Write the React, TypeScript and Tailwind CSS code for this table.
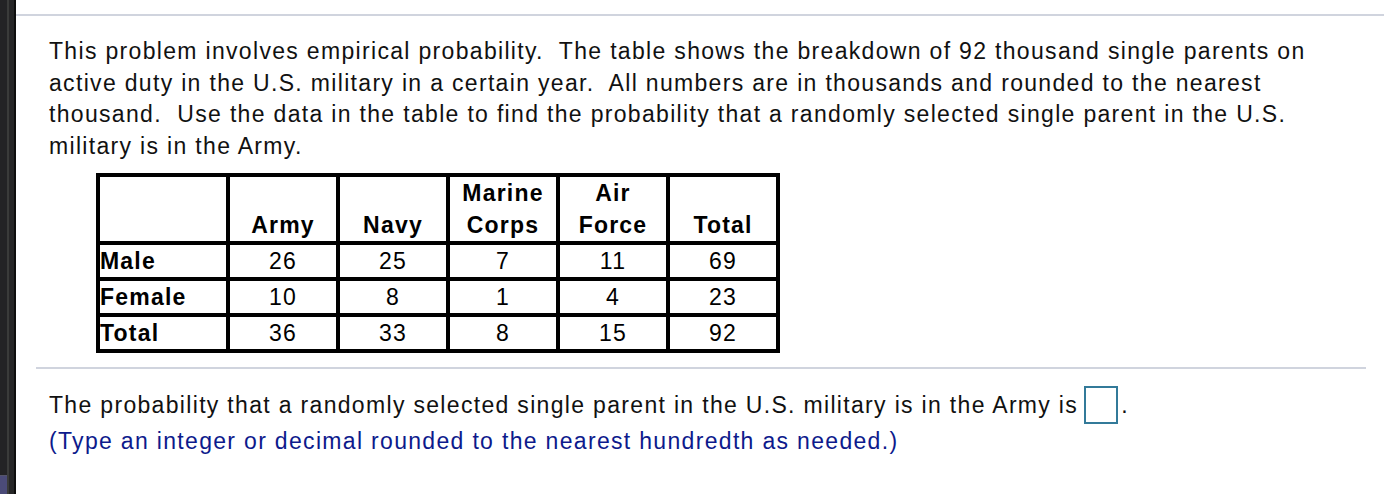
import React from 'react'

const cols = ['Army', 'Navy', 'Marine Corps', 'Air Force', 'Total']

const rows: [string, number[]][] = [
  ['Male', [26, 25, 7, 11, 69]],
  ['Female', [10, 8, 1, 4, 23]],
  ['Total', [36, 33, 8, 15, 92]],
]

function Sidebar() {
  return (
    <div className="w-[16px] h-full flex shrink-0">
      <div className="w-[7px] h-full flex flex-col bg-[#232325]">
        <div className="flex-1" />
        <div className="h-[1px] bg-[#55556a]" />
        <div className="h-[18px] bg-[#4b4b78]" />
      </div>
      <div className="w-[2px] h-full bg-[#3a3b3a]" />
      <div className="w-[5px] h-full bg-[#262627]" />
      <div className="w-[2px] h-full bg-[#0e0e0e]" />
    </div>
  )
}

function DataTable() {
  return (
    <table className="ml-[80px] border-collapse border-[4px] border-black text-[23px] tracking-[1.2px] text-black table-fixed w-[681px]">
      <thead>
        <tr className="h-[65px]">
          <th className="w-[130px] border-[4px] border-black" />
          {cols.map((c) => (
            <th
              key={c}
              className="w-[110px] border-[4px] border-black align-bottom font-bold leading-[32px] pb-0 px-0"
            >
              {c === 'Marine Corps' ? (
                <>
                  Marine
                  <br />
                  Corps
                </>
              ) : c === 'Air Force' ? (
                <>
                  Air
                  <br />
                  Force
                </>
              ) : (
                c
              )}
            </th>
          ))}
        </tr>
      </thead>
      <tbody>
        {rows.map(([label, vals]) => (
          <tr key={label} className="h-[36px]">
            <td className="border-[4px] border-black font-bold text-left leading-[28px] p-0">{label}</td>
            {vals.map((v, i) => (
              <td key={i} className="border-[4px] border-black text-center leading-[28px] p-0">
                {v}
              </td>
            ))}
          </tr>
        ))}
      </tbody>
    </table>
  )
}

export default function App() {
  return (
    <div className="w-[1384px] h-[494px] flex bg-white overflow-hidden font-['Liberation_Sans',Arial,sans-serif]">
      <Sidebar />
      <div className="flex-1 flex flex-col pt-[14px]">
        {/* top divider */}
        <div className="h-[2px] bg-[#d0d4de]" />

        {/* question text */}
        <div className="pl-[33px] pt-[20px] text-[23px] tracking-[1.32px] leading-[31.6px] text-[#111] whitespace-nowrap">
          This problem involves empirical probability.&nbsp; The table shows the breakdown of 92 thousand single parents on
          <br />
          active duty in the U.S. military in a certain year.&nbsp; All numbers are in thousands and rounded to the nearest
          <br />
          thousand.&nbsp; Use the data in the table to find the probability that a randomly selected single parent in the U.S.
          <br />
          military is in the Army.
        </div>

        <div className="mt-[11px]">
          <DataTable />
        </div>

        {/* answer divider */}
        <div className="mt-[14px] ml-[20px] mr-[18px] h-[2px] bg-[#d0d4de]" />

        <div className="pl-[33px] pt-[17px] text-[23px] tracking-[1.32px] text-[#111] whitespace-nowrap">
          <div className="flex items-center h-[38px]">
            <span>The probability that a randomly selected single parent in the U.S. military is in the Army is</span>
            <span className="ml-[6px] w-[34px] h-[38px] border-2 border-[#337a99] bg-white inline-block shrink-0" />
            <span className="ml-[3px]">.</span>
          </div>
          <div className="leading-[34px] text-[#0d1a8c]">
            (Type an integer or decimal rounded to the nearest hundredth as needed.)
          </div>
        </div>
      </div>
    </div>
  )
}
